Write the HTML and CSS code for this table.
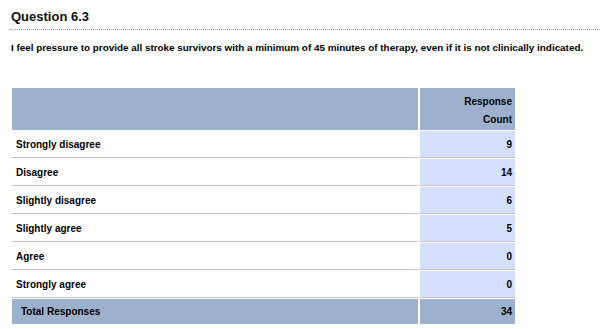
FILE: index.html
```html
<!DOCTYPE html>
<html>
<head>
<meta charset="utf-8">
<link rel="stylesheet" href="styles.css">
</head>
<body>
<div class="section">
  <h1 class="title">Question 6.3</h1>
  <p class="question">I feel pressure to provide all stroke survivors with a minimum of 45 minutes of therapy, even if it is not clinically indicated.</p>
  <table class="results">
    <thead>
      <tr>
        <th class="head-label"></th>
        <th class="head-count">Response<br>Count</th>
      </tr>
    </thead>
    <tbody>
      <tr><td class="label">Strongly disagree</td><td class="count">9</td></tr>
      <tr><td class="label">Disagree</td><td class="count">14</td></tr>
      <tr><td class="label">Slightly disagree</td><td class="count">6</td></tr>
      <tr><td class="label">Slightly agree</td><td class="count">5</td></tr>
      <tr><td class="label">Agree</td><td class="count">0</td></tr>
      <tr><td class="label">Strongly agree</td><td class="count">0</td></tr>
      <tr class="total"><td class="label">Total Responses</td><td class="count">34</td></tr>
    </tbody>
  </table>
</div>
<div class="rule"></div>
</body>
</html>
```

FILE: styles.css
```css
html, body {
  margin: 0;
  padding: 0;
  background: #ffffff;
}
body {
  font-family: "Liberation Sans", Arial, sans-serif;
  color: #000000;
  font-weight: bold;
  overflow: hidden;
}
.section {
  padding: 9px 0 0 10px;
}
.title {
  margin: 0;
  padding: 0 0 4px 1px;
  font-size: 13px;
  line-height: 16px;
  font-weight: bold;
  color: #111111;
  border-bottom: 1px dotted #9a9a9a;
}
.question {
  margin: 11px 0 0 0;
  padding-left: 1px;
  font-size: 9.88px;
  line-height: 14px;
  white-space: nowrap;
}
.results {
  margin-top: 32px;
  border-collapse: separate;
  border-spacing: 2px 1px;
  font-size: 10px;
}
.results th,
.results td {
  padding: 0;
}
.head-label {
  width: 406px;
  height: 42px;
  background: #9db0cc;
}
.head-count {
  width: 95px;
  height: 42px;
  background: #9db0cc;
  text-align: right;
  vertical-align: top;
  padding: 5px 3px 1px 0 !important;
  line-height: 18px;
  box-sizing: border-box;
  font-weight: bold;
}
.label {
  height: 26px;
  padding-left: 4px !important;
  background: #ffffff;
  border-bottom: 1px solid #c2c2c2;
  vertical-align: middle;
}
.count {
  height: 26px;
  padding-right: 3px !important;
  text-align: right;
  background: #d4e0fb;
  border-bottom: 1px solid #c2c2c2;
  vertical-align: middle;
}
.total .label,
.total .count {
  background: #9db0cc;
  border-bottom: none;
  height: 25px;
}
.total .label {
  padding-left: 9px !important;
}
.rule {
  margin-top: 4px;
  height: 2px;
  background: #6a6a6a;
}
```
